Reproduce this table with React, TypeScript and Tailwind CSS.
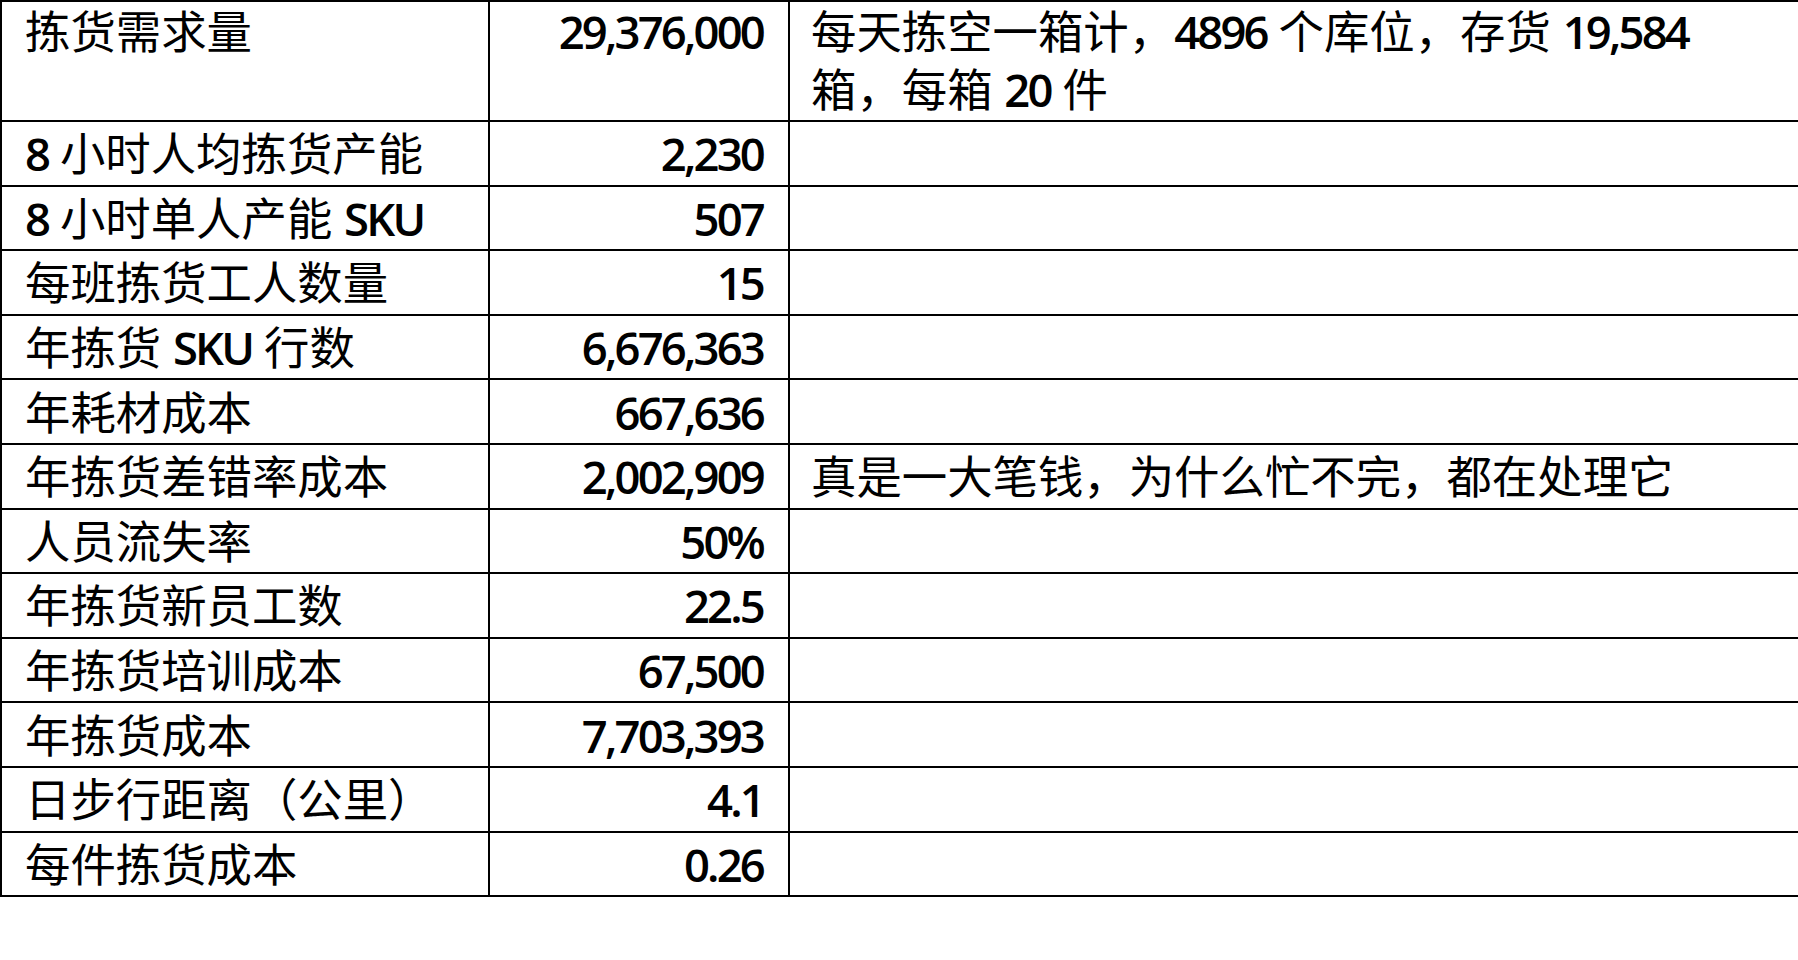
import React from "react";

interface Row {
  label: string;
  value: string;
  note?: string[];
}

const rows: Row[] = [
  {
    label: "拣货需求量",
    value: "29,376,000",
    note: ["每天拣空一箱计，4896 个库位，存货 19,584", "箱，每箱 20 件"],
  },
  { label: "8 小时人均拣货产能", value: "2,230" },
  { label: "8 小时单人产能 SKU", value: "507" },
  { label: "每班拣货工人数量", value: "15" },
  { label: "年拣货 SKU 行数", value: "6,676,363" },
  { label: "年耗材成本", value: "667,636" },
  { label: "年拣货差错率成本", value: "2,002,909", note: ["真是一大笔钱，为什么忙不完，都在处理它"] },
  { label: "人员流失率", value: "50%" },
  { label: "年拣货新员工数", value: "22.5" },
  { label: "年拣货培训成本", value: "67,500" },
  { label: "年拣货成本", value: "7,703,393" },
  { label: "日步行距离（公里）", value: "4.1" },
  { label: "每件拣货成本", value: "0.26" },
];

// latin runs are set heavier and tighter, like the narrow office font in the sheet
function Mixed({ text }: { text: string }) {
  const parts = text.match(/[!-~]+| +|[^\x20-\x7e]+/g) ?? [];
  return (
    <>
      {parts.map((p, i) =>
        /^[!-~]+$/.test(p) ? (
          <span key={i} className="font-semibold tracking-[-2.8px]">
            {p}
          </span>
        ) : (
          <span key={i}>{p}</span>
        )
      )}
    </>
  );
}

export default function App() {
  return (
    <div className="w-full h-[960px] overflow-hidden bg-white">
      <table
        className="w-[1830px] border-collapse text-[45.4px] leading-[58px] text-black"
        style={{ fontFamily: '"Open Sans", "Noto Sans CJK SC", sans-serif' }}
      >
        <colgroup>
          <col className="w-[488px]" />
          <col className="w-[300px]" />
          <col />
        </colgroup>
        <tbody>
          {rows.map((r, i) => {
            const align = i === 0 ? "align-top" : "align-middle";
            return (
              <tr key={r.label} className={i === 0 ? "h-[120px]" : "h-[64.6px]"}>
                <td className={`border-2 border-black pl-[23px] pr-2 whitespace-nowrap ${align}`}>
                  <Mixed text={r.label} />
                </td>
                <td className={`border-2 border-black pr-[25px] text-right whitespace-nowrap ${align}`}>
                  <Mixed text={r.value} />
                </td>
                <td className={`border-2 border-black pl-[21px] whitespace-nowrap ${align}`}>
                  {r.note?.map((line, j) => (
                    <div key={j}>
                      <Mixed text={line} />
                    </div>
                  ))}
                </td>
              </tr>
            );
          })}
        </tbody>
      </table>
    </div>
  );
}
